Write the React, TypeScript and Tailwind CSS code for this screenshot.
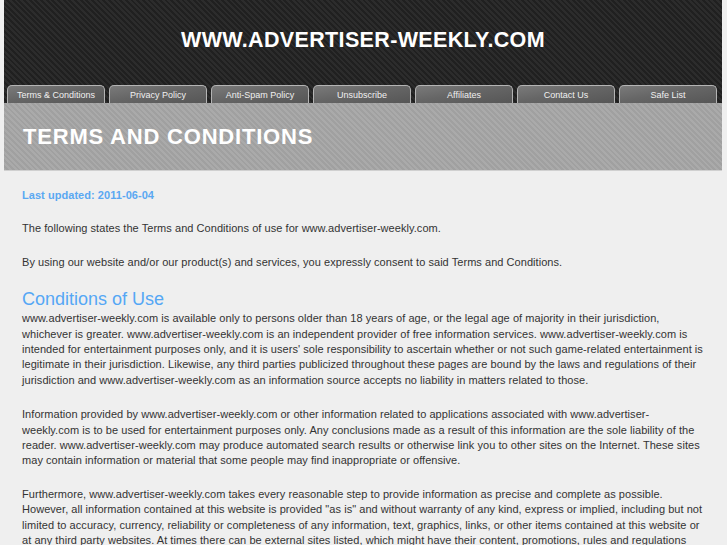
import React from 'react';

const tabs = [
  'Terms & Conditions',
  'Privacy Policy',
  'Anti-Spam Policy',
  'Unsubscribe',
  'Affiliates',
  'Contact Us',
  'Safe List',
];

export default function App() {
  return (
    <div className="min-h-screen bg-[#efefef] font-['Liberation_Sans',Arial,sans-serif] text-[#333]">
      <div className="ml-[4px] w-[718px]">
        <header className="bg-[repeating-linear-gradient(45deg,#2c2c2c_0px,#2c2c2c_2px,#202020_2px,#202020_4px)]">
          <div className="flex h-[85px] items-center justify-center pb-[4px]">
            <h1 className="text-[21.5px] font-bold tracking-[0.35px] text-white">WWW.ADVERTISER-WEEKLY.COM</h1>
          </div>
          <nav className="flex gap-[4px] px-[3px]">
            {tabs.map((t) => (
              <a
                key={t}
                href="#"
                className="flex h-[18px] w-[98px] items-center justify-center rounded-t-[5px] border border-b-0 border-[#b4b4b4] bg-[linear-gradient(170deg,#7a7a7a_0%,#666_45%,#565656_100%)] pt-[2px] text-[9px] text-[#f0f0f0]"
              >
                {t}
              </a>
            ))}
          </nav>
        </header>
        <div className="flex h-[68px] items-center border-b border-[#d0d0d0] bg-[repeating-linear-gradient(45deg,#aaaaaa_0px,#aaaaaa_2px,#a0a0a0_2px,#a0a0a0_4px)] px-[19px]">
          <h2 className="text-[22px] font-bold tracking-[0.8px] text-white">TERMS AND CONDITIONS</h2>
        </div>
        <main className="pl-[18px] pr-[14px] pt-[17px] text-[11px] leading-[15.4px] tracking-[0.05px]">
          <p className="mb-[18px] font-bold text-[#5aa8f2]">Last updated: 2011-06-04</p>
          <p className="mb-[18px]">
            The following states the Terms and Conditions of use for www.advertiser-weekly.com.
          </p>
          <p className="mb-[18px]">
            By using our website and/or our product(s) and services, you expressly consent to said Terms and Conditions.
          </p>
          <h3 className="mb-[1px] mt-[5px] text-[18px] leading-[22px] tracking-normal text-[#55a7f5]">Conditions of Use</h3>
          <p className="mb-[19px]">
            www.advertiser-weekly.com is available only to persons older than 18 years of age, or the legal age of majority in their jurisdiction, whichever is greater. www.advertiser-weekly.com is an independent provider of free information services. www.advertiser-weekly.com is intended for entertainment purposes only, and it is users' sole responsibility to ascertain whether or not such game-related entertainment is legitimate in their jurisdiction. Likewise, any third parties publicized throughout these pages are bound by the laws and regulations of their jurisdiction and www.advertiser-weekly.com as an information source accepts no liability in matters related to those.
          </p>
          <p className="mb-[18px] pr-[4px]">
            Information provided by www.advertiser-weekly.com or other information related to applications associated with www.advertiser-weekly.com is to be used for entertainment purposes only. Any conclusions made as a result of this information are the sole liability of the reader. www.advertiser-weekly.com may produce automated search results or otherwise link you to other sites on the Internet. These sites may contain information or material that some people may find inappropriate or offensive.
          </p>
          <p className="mb-[18px]">
            Furthermore, www.advertiser-weekly.com takes every reasonable step to provide information as precise and complete as possible. However, all information contained at this website is provided "as is" and without warranty of any kind, express or implied, including but not limited to accuracy, currency, reliability or completeness of any information, text, graphics, links, or other items contained at this website or at any third party websites. At times there can be external sites listed, which might have their content, promotions, rules and regulations changed without notice.
          </p>
        </main>
      </div>
    </div>
  );
}
